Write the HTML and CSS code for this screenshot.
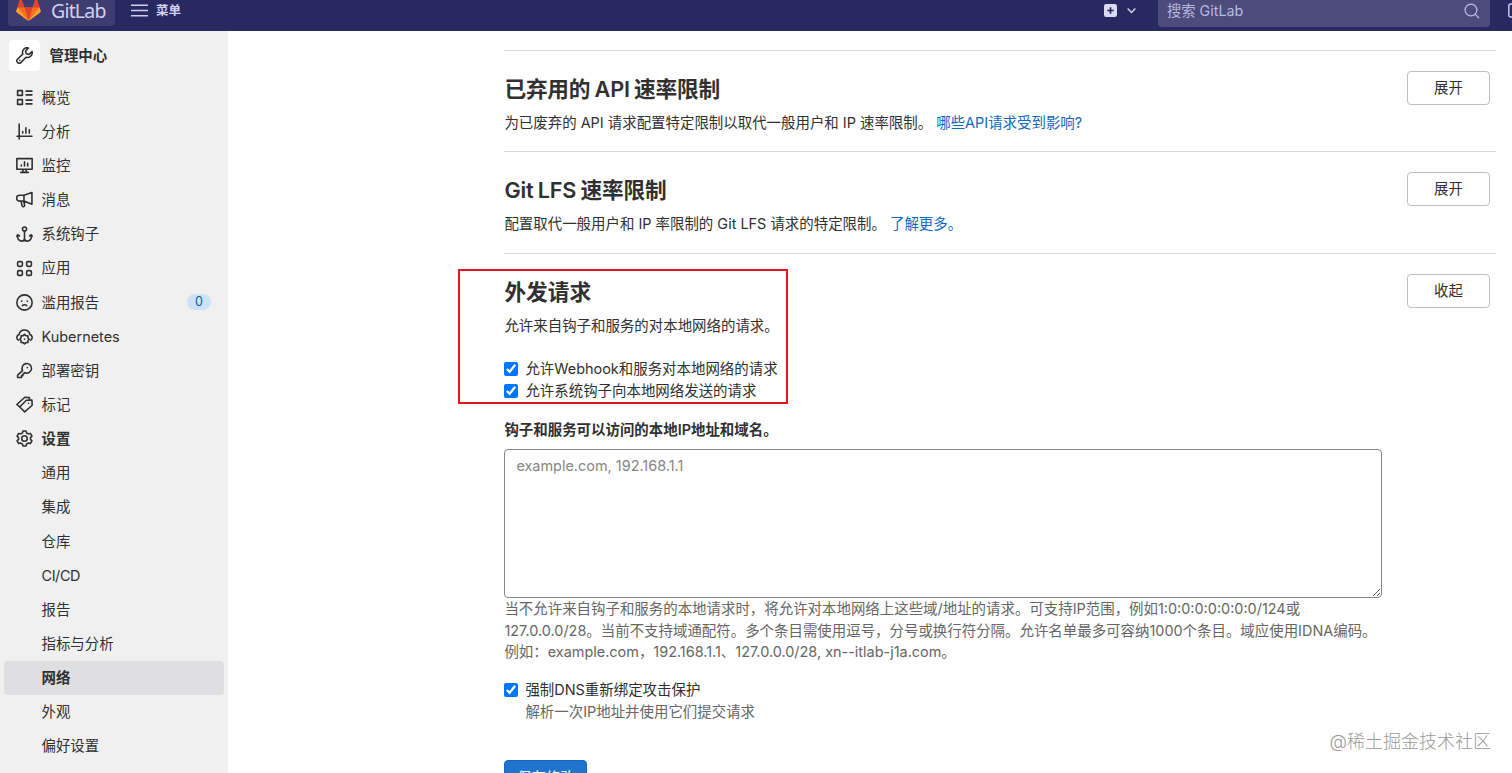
FILE: index.html
```html
<!DOCTYPE html>
<html lang="zh-CN">
<head>
    <meta charset="UTF-8">
    <meta name="viewport" content="width=device-width, initial-scale=1.0">
    <title>网络 · 管理中心 · GitLab</title>
    <link rel="stylesheet" href="styles.css">
</head>
<body>
    <header class="navbar">
        <a class="brand">
            <svg class="tanuki" viewBox="0 0 25 24">
                <path d="M.4 12.6L4.2.9c.2-.6 1-.6 1.200 0L8.500 9.500h8L19.600.9c.2-.6 1-.6 1.200 0l3.800 11.700c.2.700 0 1.400-.6 1.800L12.500 23 1 14.400c-.6-.4-.8-1.100-.6-1.800z" fill="#fc6d26"/>
                <path d="M8.500 9.500h8L12.500 23z" fill="#e24329"/>
                <path d="M1.600 9.500L.4 12.600c-.2.700 0 1.400.6 1.800L12.500 23zM23.400 9.500l1.200 3.100c.2.700 0 1.400-.6 1.800L12.500 23z" fill="#fca326"/>
                <path d="M1.400 9.500h7.100L5.400.9c-.2-.6-1-.6-1.200 0zM23.600 9.500h-7.100L19.600.9c.2-.6 1-.6 1.200 0z" fill="#e24329"/>
            </svg>
            <span>GitLab</span>
        </a>
        <a class="menu">
            <svg viewBox="0 0 16 16"><path d="M0 3h16M0 8h16M0 13h16"/></svg>
            <span>菜单</span>
        </a>
        <div class="nav-right">
            <a class="new">
                <svg viewBox="0 0 12 12"><rect width="12" height="12" rx="2" fill="#dcd9f5"/><path d="M6 3v6M3 6h6" stroke="#292961" stroke-width="1.6"/></svg>
                <svg class="caret" viewBox="0 0 10 10"><path d="M1.500 3.200L5 6.800l3.500-3.600"/></svg>
            </a>
            <div class="search">
                <span>搜索 GitLab</span>
                <svg viewBox="0 0 16 16"><circle cx="7" cy="7" r="5.9"/><path d="M11.300 11.300l3.700 3.700"/></svg>
            </div>
            <svg class="issues" viewBox="0 0 16 16"><rect x="0.8" y="1" width="12" height="13" rx="2"/></svg>
        </div>
    </header>

    <div class="page">
        <aside class="sidebar">
            <div class="context">
                <span class="avatar"><svg class="icon" viewBox="0 0 16 16"><path d="M11.700.9a4.400 4.400 0 0 0-5.300 5.800L1.300 11.500a1.900 1.900 0 0 0 0 2.800l.4.4a1.900 1.900 0 0 0 2.800 0l4.900-5.100a4.400 4.400 0 0 0 5.700-5.300L12.300 7 9.700 6.300 9 3.700z"/><path d="M3.500 12.500h.1"/></svg></span>
                <span>管理中心</span>
            </div>
            <ul class="nav">
                <li><svg class="icon" viewBox="0 0 16 16"><path d="M1.500 1.500H6V6H1.500zM1.500 10H6v4.500H1.500zM9.500 2H15M9.500 5.500H15M9.500 10.500H15M9.500 14H15"/></svg>概览</li>
                <li><svg class="icon" viewBox="0 0 16 16"><path d="M3 1v14M1 12.500h14M6.300 9.500V8M9.300 9.500V4.500M12.500 9.500V6.500"/></svg>分析</li>
                <li><svg class="icon" viewBox="0 0 16 16"><path d="M.8 1.500h14.400v10H.8zM6.500 11.500v3M9.500 11.500v3M4.500 14.500h7M5 8.500v-1M8 8.500v-4M11 8.500V6"/></svg>监控</li>
                <li><svg class="icon" viewBox="0 0 16 16"><path d="M7.500 4L15 1.500v11L7.500 9.500H3.300a2.600 2.600 0 0 1 0-5.500zM7.500 4v5.500M4.800 9.700l.9 4.100a1.200 1.200 0 0 0 2.400-.5l-.8-3.600"/></svg>消息</li>
                <li><svg class="icon" viewBox="0 0 16 16"><circle cx="8" cy="2.800" r="1.900"/><path d="M8 4.800v9M1.500 8.500V10c0 2.500 2 4.200 3.800 4.200S8 13 8 11.800c0 1.200.9 2.400 2.700 2.400s3.800-1.700 3.800-4.200V8.500M.8 9.800l.7-1.600 1.700 1.200M15.200 9.800l-.7-1.600-1.700 1.200"/></svg>系统钩子</li>
                <li><svg class="icon" viewBox="0 0 16 16"><rect x="1.500" y="1.500" width="4.500" height="4.500" rx="1.200"/><rect x="10" y="1.500" width="4.500" height="4.500" rx="1.200"/><rect x="1.500" y="10" width="4.500" height="4.500" rx="1.200"/><rect x="10" y="10" width="4.500" height="4.500" rx="1.200"/></svg>应用</li>
                <li><svg class="icon" viewBox="0 0 16 16"><circle cx="8" cy="8" r="7.200"/><path d="M6 11c.7-1.200 3.300-1.200 4 0M5.200 6.700h.2M10.600 6.700h.2"/></svg>滥用报告<span class="badge">0</span></li>
                <li><svg class="icon" viewBox="0 0 16 16"><path d="M2.300 11.500A3 3 0 0 1 3 6a5.100 5.100 0 0 1 10 0 3 3 0 0 1 .7 5.500"/><path d="M8 6l1.300 1.200 1.900.2.100 1.800 1 1.300-1 1.300-.1 1.800-1.900.2L8 15l-1.300-1.200-1.900-.2-.1-1.800-1-1.300 1-1.300.1-1.800 1.900-.2z"/><path d="M8 10.500h.1"/></svg>Kubernetes</li>
                <li><svg class="icon" viewBox="0 0 16 16"><path d="M6.200 8.100a4.500 4.500 0 1 1 2 1.900L6.500 11.600v1.200H5.200v1.800H1.500v-2.300z"/><path d="M10.600 5.300h.1"/></svg>部署密钥</li>
                <li><svg class="icon" viewBox="0 0 16 16"><path d="M9.800 4l5.200-.3.200 5-7 6.300-4.700-4.700zM3.500 10.300L.8 8l7.500-6.800 4.200.2.300 2.300M11.800 6.800h.1"/></svg>标记</li>
                <li class="bold"><svg class="icon" viewBox="0 0 16 16"><path d="M6.600.9h2.800l.6 1.900 1.500.9 2-.5 1.500 2.600L13.600 7.200v1.600l1.400 1.400-1.500 2.600-2-.5-1.500.9-.6 1.900H6.600L6 13.200l-1.500-.9-2 .5L1 10.200l1.400-1.400V7.200L1 5.800l1.500-2.600 2 .5L6 2.800z"/><circle cx="8" cy="8" r="2.600"/></svg>设置</li>
            </ul>
            <ul class="nav sub">
                <li>通用</li>
                <li>集成</li>
                <li>仓库</li>
                <li><span class="cicd">CI/CD</span></li>
                <li>报告</li>
                <li>指标与分析</li>
                <li class="active">网络</li>
                <li>外观</li>
                <li>偏好设置</li>
            </ul>
        </aside>

        <main class="content">
            <section class="settings">
                <div class="settings-header">
                    <h4 class="mixed">已弃用的 API 速率限制</h4>
                    <button class="btn">展开</button>
                </div>
                <p>为已废弃的 API 请求配置特定限制以取代一般用户和 IP 速率限制。 <a>哪些API请求受到影响?</a></p>
            </section>
            <section class="settings">
                <div class="settings-header">
                    <h4 class="mixed">Git LFS 速率限制</h4>
                    <button class="btn">展开</button>
                </div>
                <p>配置取代一般用户和 IP 率限制的 Git LFS 请求的特定限制。 <a>了解更多。</a></p>
            </section>
            <section class="settings expanded">
                <div class="highlight"></div>
                <div class="settings-header">
                    <h4>外发请求</h4>
                    <button class="btn">收起</button>
                </div>
                <p>允许来自钩子和服务的对本地网络的请求。</p>
                <form class="form">
                    <label class="check"><input type="checkbox" checked><span>允许Webhook和服务对本地网络的请求</span></label>
                    <label class="check"><input type="checkbox" checked><span>允许系统钩子向本地网络发送的请求</span></label>
                    <label class="field-label" for="allowlist">钩子和服务可以访问的本地IP地址和域名。</label>
                    <textarea id="allowlist" placeholder="example.com, 192.168.1.1"></textarea>
                    <div class="help">当不允许来自钩子和服务的本地请求时，将允许对本地网络上这些域/地址的请求。可支持IP范围，例如1:0:0:0:0:0:0:0/124或<br>127.0.0.0/28。当前不支持域通配符。多个条目需使用逗号，分号或换行符分隔。允许名单最多可容纳1000个条目。域应使用IDNA编码。<br>例如：example.com，192.168.1.1、127.0.0.0/28, xn--itlab-j1a.com。</div>
                    <label class="check dns"><input type="checkbox" checked><span>强制DNS重新绑定攻击保护<br><small>解析一次IP地址并使用它们提交请求</small></span></label>
                    <button type="button" class="btn save">保存修改</button>
                </form>
            </section>
        </main>
    </div>
    <div class="watermark">@稀土掘金技术社区</div>
</body>
</html>
```

FILE: styles.css
```css
* {
    box-sizing: border-box;
}

body {
    margin: 0;
    height: 773px;
    overflow: hidden;
    background: #fff;
    color: #303030;
    font-family: Inter, "Noto Sans CJK SC", sans-serif;
    font-size: 14.45px;
    line-height: 21.8px;
}

ul, h4, p {
    margin: 0;
    padding: 0;
    list-style: none;
}

svg {
    flex: none;
    fill: none;
}

.navbar {
    display: flex;
    height: 31px;
    padding-left: 8px;
    background: #292961;
    color: #d1d0f0;
    overflow: hidden;
}

.brand {
    display: flex;
    align-items: center;
    width: 107px;
    height: 36px;
    margin-top: -10px;
    padding: 5px 0 0 8px;
    gap: 10px;
    border-radius: 4px;
    background: #3d3d72;
    color: #ececfa;
    font-family: "Noto Sans", sans-serif;
    font-size: 19.5px;
    letter-spacing: -0.8px;
}

.tanuki {
    width: 25px;
    height: 24px;
    margin-top: -2px;
}

.menu {
    display: flex;
    align-items: center;
    height: 21px;
    margin-left: 16px;
    gap: 8px;
    font-size: 12.5px;
    font-weight: 700;
}

.menu svg {
    width: 17px;
    height: 17px;
    stroke: #d1d0f0;
    stroke-width: 1.4;
}

.nav-right {
    display: flex;
    margin-left: auto;
}

.new {
    display: flex;
    align-items: center;
    height: 21px;
    margin-right: 21px;
    gap: 9px;
}

.new svg {
    width: 13px;
    height: 13px;
}

.new .caret {
    width: 11px;
    height: 11px;
    stroke: #d1d0f0;
    stroke-width: 1.4;
}

.search {
    display: flex;
    align-items: center;
    justify-content: space-between;
    width: 332px;
    height: 36px;
    margin-top: -9px;
    padding: 4px 10px 0 9px;
    border-radius: 4px;
    background: #4c4b7c;
    color: #b9b8df;
    font-size: 14.3px;
}

.search svg {
    width: 16px;
    height: 16px;
    stroke: #c3c2e6;
    stroke-width: 1.2;
}

.issues {
    width: 16px;
    height: 16px;
    margin: 3px -12px 0 18px;
    stroke: #d1d0f0;
    stroke-width: 1.4;
}

.page {
    display: flex;
    height: 742px;
}

.sidebar {
    flex: none;
    width: 228px;
    padding: 9px 4px 0;
    background: #f0f0f0;
}

.context {
    display: flex;
    align-items: center;
    height: 31px;
    margin-bottom: 9.5px;
    padding-left: 5px;
    gap: 9.5px;
    font-weight: 600;
}

.avatar {
    display: flex;
    align-items: center;
    justify-content: center;
    width: 31px;
    height: 31px;
    border-radius: 4px;
    background: #fff;
}

.icon {
    width: 17px;
    height: 17px;
    stroke: #303030;
    stroke-width: 1.5;
    stroke-linecap: round;
    stroke-linejoin: round;
}

.nav li {
    display: flex;
    align-items: center;
    height: 34.15px;
    padding: 0 13px 0 12px;
    gap: 8.5px;
    border-radius: 4px;
}

.nav.sub li {
    padding-left: 37.5px;
}

.nav .bold,
.nav .active {
    font-weight: 600;
}

.nav .active {
    background: #dfdfe1;
}

.cicd {
    letter-spacing: -0.4px;
}

.badge {
    width: 24px;
    height: 16px;
    margin-left: auto;
    border-radius: 8px;
    background: #cbe2f9;
    color: #0b5cad;
    font-size: 12.5px;
    line-height: 16px;
    text-align: center;
}

.content {
    width: 992px;
    margin: 19px 0 0 276.4px;
}

.settings {
    position: relative;
    height: 101.3px;
    padding-top: 20px;
    border-top: 1px solid #dbdbdb;
}

.settings-header {
    display: flex;
    align-items: flex-start;
    justify-content: space-between;
    height: 41px;
    padding-right: 6.4px;
}

h4 {
    font-size: 21.7px;
    font-weight: 600;
    line-height: 37px;
}

.mixed {
    letter-spacing: -0.2px;
    word-spacing: -1px;
}

a {
    color: #1068bf;
}

.navbar a {
    color: inherit;
}

.btn {
    width: 83px;
    height: 34px;
    padding-bottom: 4px;
    border: 1px solid #bfbfbf;
    border-radius: 4px;
    background: #fff;
    color: #303030;
    font-family: inherit;
    font-size: 14.4px;
}

/* red frame around the outbound request switches */
.highlight {
    position: absolute;
    top: 15px;
    left: -46.4px;
    width: 330px;
    height: 135px;
    border: 2px solid #e3171b;
}

.form {
    padding-top: 22px;
}

.check {
    display: flex;
    align-items: flex-start;
    gap: 7px;
}

.check input {
    flex: none;
    width: 14px;
    height: 14px;
    margin: 4px 0 0;
}

.field-label {
    display: block;
    margin: 17px 0 8px;
    font-weight: 600;
}

textarea {
    display: block;
    width: 878px;
    height: 149px;
    padding: 5px 11px;
    border: 1px solid #868686;
    border-radius: 4px;
    font: inherit;
}

textarea::placeholder {
    color: #868686;
}

.help {
    color: #666;
    white-space: nowrap;
}

.dns {
    margin-top: 16px;
}

.dns small {
    color: #666;
    font-size: inherit;
}

.save {
    margin-top: 37px;
    padding-bottom: 2px;
    border-color: #1068bf;
    background: #1f75cb;
    color: #fff;
}

.watermark {
    position: absolute;
    right: 21px;
    bottom: 20px;
    color: #999;
    font-size: 18px;
    font-weight: 300;
}
```
